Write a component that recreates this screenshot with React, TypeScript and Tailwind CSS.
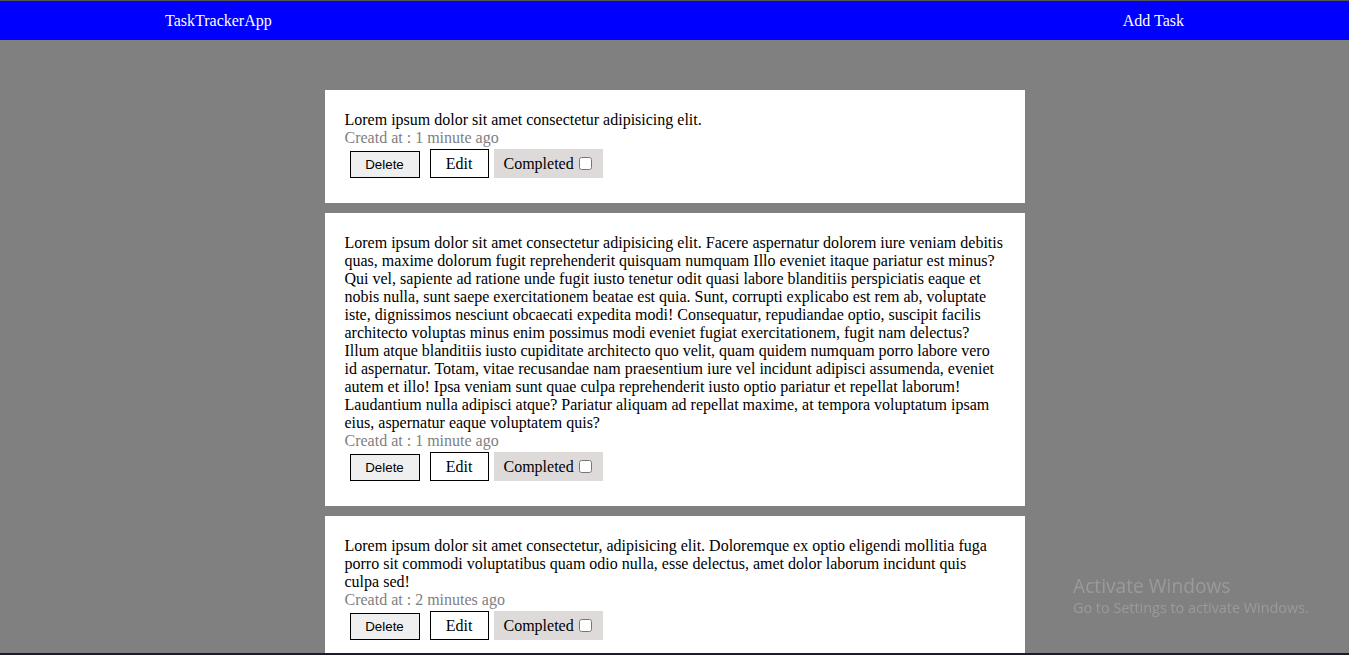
import React from "react";

interface Task {
  id: number;
  text: string;
  created: string;
}

const TASKS: Task[] = [
  {
    id: 1,
    text: "Lorem ipsum dolor sit amet consectetur adipisicing elit.",
    created: "1 minute ago"
  },
  {
    id: 2,
    text: "Lorem ipsum dolor sit amet consectetur adipisicing elit. Facere aspernatur dolorem iure veniam debitis quas, maxime dolorum fugit reprehenderit quisquam numquam Illo eveniet itaque pariatur est minus? Qui vel, sapiente ad ratione unde fugit iusto tenetur odit quasi labore blanditiis perspiciatis eaque et nobis nulla, sunt saepe exercitationem beatae est quia. Sunt, corrupti explicabo est rem ab, voluptate iste, dignissimos nesciunt obcaecati expedita modi! Consequatur, repudiandae optio, suscipit facilis architecto voluptas minus enim possimus modi eveniet fugiat exercitationem, fugit nam delectus? Illum atque blanditiis iusto cupiditate architecto quo velit, quam quidem numquam porro labore vero id aspernatur. Totam, vitae recusandae nam praesentium iure vel incidunt adipisci assumenda, eveniet autem et illo! Ipsa veniam sunt quae culpa reprehenderit iusto optio pariatur et repellat laborum! Laudantium nulla adipisci atque? Pariatur aliquam ad repellat maxime, at tempora voluptatum ipsam eius, aspernatur eaque voluptatem quis?",
    created: "1 minute ago"
  },
  {
    id: 3,
    text: "Lorem ipsum dolor sit amet consectetur, adipisicing elit. Doloremque ex optio eligendi mollitia fuga porro sit commodi voluptatibus quam odio nulla, esse delectus, amet dolor laborum incidunt quis culpa sed!",
    created: "2 minutes ago"
  }
];

function TaskCard({ task }: { task: Task }) {
  return (
    <div className="bg-white w-[700px] px-5 pt-[21px] pb-[25px] mb-[10px]">
      <p className="leading-[18px]">{task.text}</p>
      <p className="leading-[18px] text-[#808080]">Creatd at : {task.created}</p>
      <div className="flex items-end h-[31px]">
        <button
          type="button"
          className="ml-[5px] w-[70px] h-[27px] border border-black bg-[#efefef] text-[13.33px] font-['Liberation_Sans',Arial,sans-serif] text-black"
        >
          Delete
        </button>
        <button
          type="button"
          className="ml-[10px] w-[59px] h-[29px] border border-black bg-white text-[16px] text-black"
        >
          Edit
        </button>
        <label className="ml-[5px] w-[109px] h-[29px] bg-[#dfdada] flex items-center pl-[10px] text-[16px]">
          Completed
          <input type="checkbox" className="ml-[5px] w-[13px] h-[13px] accent-white" />
        </label>
      </div>
    </div>
  );
}

export default function App() {
  return (
    <div className="min-h-screen bg-[#808080] font-['Liberation_Serif','Times_New_Roman',serif] text-[16px] text-black">
      <nav className="h-[40px] bg-[#0000ff] border-t border-[#555555] flex items-center justify-between text-white">
        <span className="ml-[165px]">TaskTrackerApp</span>
        <span className="mr-[165px]">Add Task</span>
      </nav>

      <main className="flex flex-col items-center pt-[50px]">
        {TASKS.map((t) => (
          <TaskCard key={t.id} task={t} />
        ))}
      </main>

      {/* windows watermark + taskbar edge over the page */}
      <div className="fixed left-[1073px] top-[574px] text-[#9a9a9a] font-['Open_Sans','Noto_Sans',sans-serif] pointer-events-none">
        <div className="text-[19.2px] leading-[24px]">Activate Windows</div>
        <div className="text-[14.4px] leading-[20px]">Go to Settings to activate Windows.</div>
      </div>
      <div className="fixed left-0 right-0 bottom-0 h-[2px] bg-[#201a28]" />
    </div>
  );
}
